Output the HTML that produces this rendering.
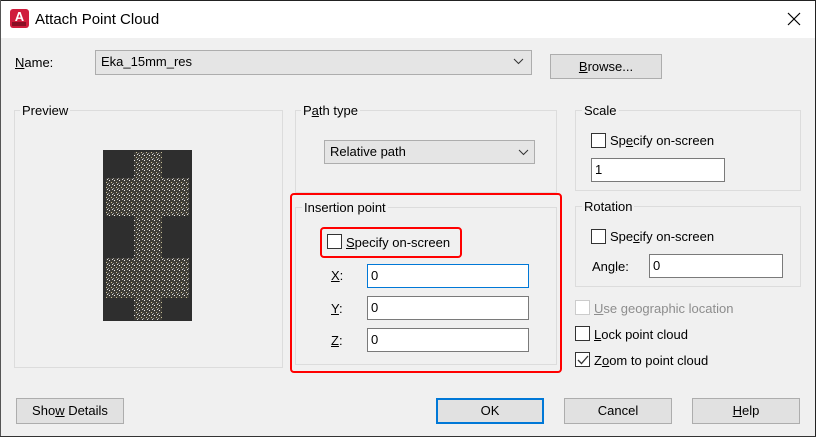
<!DOCTYPE html>
<html><head><style>
*{box-sizing:border-box;margin:0;padding:0}
body{width:816px;height:437px;background:#f0f0f0;font-family:"Liberation Sans",sans-serif;font-size:13px;color:#000;position:relative;overflow:hidden}
.a{position:absolute}
.t{position:absolute;white-space:nowrap;line-height:15px}
.g{position:absolute;border:1px solid #dcdcdc}
.gl{position:absolute;background:#f0f0f0;padding:0 2px;line-height:15px;white-space:nowrap}
.cb{position:absolute;width:15px;height:15px;border:1px solid #333;background:#fff}
.in{position:absolute;background:#fff;border:1px solid #7a7a7a;padding-left:3px;line-height:21px}
.btn{position:absolute;background:#e1e1e1;border:1px solid #adadad;text-align:center;line-height:23px}
.combo{position:absolute;background:#e5e5e5;border:1px solid #adadad;line-height:22px;padding-left:5px}
u{text-decoration:underline}
</style></head><body>
<div class="a" style="left:0;top:0;width:816px;height:38px;background:#fff"></div>
<div class="a" style="left:0;top:0;width:816px;height:1px;background:#222"></div>
<div class="a" style="left:815px;top:0;width:1px;height:437px;background:#222"></div>
<div class="a" style="left:0;top:0;width:1px;height:437px;background:#555"></div>
<div class="a" style="left:0;top:436px;width:816px;height:1px;background:#333"></div>
<div class="a" style="left:10px;top:9px;width:19px;height:19px;background:#d01c3c;border-radius:3px;color:#fff;font-weight:bold;font-size:13px;text-align:center;line-height:15px">A<div style="position:absolute;left:2px;top:13px;width:14px;height:4px;background:#8a0f24"></div></div>
<div class="t" style="left:35px;top:11px;font-size:15px;line-height:17px">Attach Point Cloud</div>
<svg class="a" style="left:787px;top:12px" width="14" height="14"><path d="M1 1L13 13M13 1L1 13" stroke="#000" stroke-width="1.2"/></svg>

<div class="t" style="left:15px;top:55px"><u>N</u>ame:</div>
<div class="combo" style="left:95px;top:50px;width:437px;height:25px">Eka_15mm_res</div>
<svg class="a" style="left:513px;top:58px" width="11" height="7"><path d="M1 1L5.5 5.5L10 1" stroke="#333" fill="none"/></svg>
<div class="btn" style="left:550px;top:54px;width:112px;height:25px"><u>B</u>rowse...</div>

<div class="g" style="left:14px;top:110px;width:269px;height:258px"></div>
<div class="gl" style="left:20px;top:103px">Preview</div>
<div class="a" style="left:103px;top:150px;width:89px;height:171px;background:#2e2e2e"></div>
<svg class="a" style="left:103px;top:150px" width="89" height="171">
<defs><pattern id="p" width="5" height="5" patternUnits="userSpaceOnUse"><rect width="5" height="5" fill="#3f3d38"/><rect x="1" y="0" width="1" height="1" fill="#eee"/><rect x="3" y="2" width="1" height="1" fill="#c8bf98"/><rect x="0" y="3" width="1" height="1" fill="#999"/><rect x="4" y="4" width="1" height="1" fill="#ddd"/></pattern></defs>
<g fill="url(#p)"><rect x="31" y="2" width="28" height="168"/><rect x="3" y="28" width="83" height="38"/><rect x="3" y="108" width="83" height="40"/></g></svg>

<div class="g" style="left:295px;top:110px;width:262px;height:83px"></div>
<div class="gl" style="left:301px;top:103px">P<u>a</u>th type</div>
<div class="combo" style="left:324px;top:140px;width:211px;height:24px">Relative path</div>
<svg class="a" style="left:518px;top:149px" width="11" height="7"><path d="M1 1L5.5 5.5L10 1" stroke="#333" fill="none"/></svg>

<div class="g" style="left:295px;top:207px;width:262px;height:158px"></div>
<div class="gl" style="left:302px;top:200px">Insertion point</div>
<div class="a" style="left:290px;top:193px;width:272px;height:180px;border:2px solid #f00;border-radius:4px"></div>
<div class="a" style="left:320px;top:227px;width:142px;height:31px;border:2px solid #f00;border-radius:4px"></div>
<div class="cb" style="left:327px;top:234px"></div>
<div class="t" style="left:346px;top:235px"><u>S</u>pecify on-screen</div>
<div class="t" style="left:331px;top:268px"><u>X</u>:</div>
<div class="in" style="left:367px;top:264px;width:162px;height:24px;border-color:#0078d7">0</div>
<div class="t" style="left:331px;top:301px"><u>Y</u>:</div>
<div class="in" style="left:367px;top:296px;width:162px;height:24px">0</div>
<div class="t" style="left:331px;top:333px"><u>Z</u>:</div>
<div class="in" style="left:367px;top:328px;width:162px;height:24px">0</div>

<div class="g" style="left:575px;top:110px;width:226px;height:81px"></div>
<div class="gl" style="left:582px;top:103px">Scale</div>
<div class="cb" style="left:591px;top:133px"></div>
<div class="t" style="left:610px;top:133px">Sp<u>e</u>cify on-screen</div>
<div class="in" style="left:591px;top:158px;width:134px;height:24px">1</div>

<div class="g" style="left:575px;top:206px;width:226px;height:81px"></div>
<div class="gl" style="left:582px;top:199px">Rotation</div>
<div class="cb" style="left:591px;top:229px"></div>
<div class="t" style="left:610px;top:229px">Spe<u>c</u>ify on-screen</div>
<div class="t" style="left:592px;top:259px">An<u>g</u>le:</div>
<div class="in" style="left:649px;top:254px;width:134px;height:24px">0</div>

<div class="cb" style="left:575px;top:300px;border-color:#ccc"></div>
<div class="t" style="left:594px;top:301px;color:#8d8d8d"><u>U</u>se geographic location</div>
<div class="cb" style="left:575px;top:326px"></div>
<div class="t" style="left:594px;top:327px"><u>L</u>ock point cloud</div>
<div class="cb" style="left:575px;top:352px"></div>
<svg class="a" style="left:577px;top:355px" width="12" height="10"><path d="M1 5L4.5 8.5L11 1" stroke="#333" fill="none" stroke-width="1.3"/></svg>
<div class="t" style="left:594px;top:353px">Z<u>o</u>om to point cloud</div>

<div class="btn" style="left:16px;top:398px;width:108px;height:26px">Sho<u>w</u> Details</div>
<div class="btn" style="left:436px;top:398px;width:108px;height:26px;border:2px solid #0078d7;line-height:22px">OK</div>
<div class="btn" style="left:564px;top:398px;width:108px;height:26px">Cancel</div>
<div class="btn" style="left:692px;top:398px;width:108px;height:26px"><u>H</u>elp</div>
</body></html>
